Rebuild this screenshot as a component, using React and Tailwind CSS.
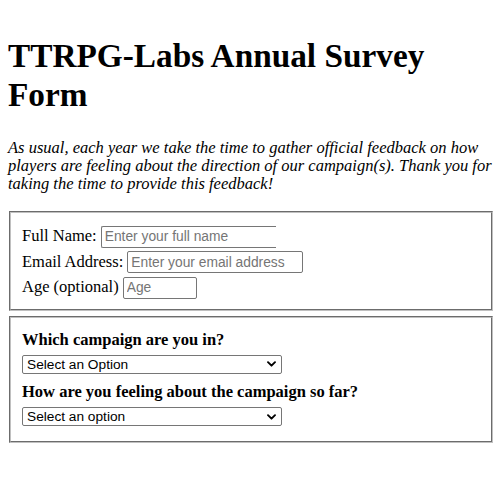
import React from "react";

function Chevron() {
  return (
    <svg
      className="pointer-events-none absolute right-[6px] top-1/2 -translate-y-1/2"
      width="9"
      height="6"
      viewBox="0 0 9 6"
      fill="none"
    >
      <path d="M1 1.2l3.5 3.5 3.5-3.5" stroke="#000" strokeWidth="1.9" strokeLinecap="round" strokeLinejoin="round" />
    </svg>
  );
}

function Select({ label }) {
  return (
    <div className="relative w-[260px] h-[19px]">
      <select
        defaultValue=""
        className="block appearance-none w-full h-full border border-[#767676] rounded-[2px] bg-white pl-[4px] pr-[20px] py-0 text-[13.7px] leading-[17px] font-['Liberation_Sans',Arial,sans-serif] text-black"
      >
        <option value="">{label}</option>
      </select>
      <Chevron />
    </div>
  );
}

const inputCls =
  "h-[22px] border border-[#767676] rounded-[2px] bg-white px-[3px] text-[13.8px] font-['Liberation_Sans',Arial,sans-serif] text-black placeholder:text-[#757575] outline-none";

export default function App() {
  return (
    <div className="min-h-[500px] bg-white pl-2 font-['Liberation_Serif','Times_New_Roman',serif] text-[16.5px] text-black">
      <h1 className="max-w-[470px] pt-[36px] text-[33.3px] font-bold leading-[39.3px]">
        TTRPG-Labs Annual Survey Form
      </h1>
      <p className="mt-[24px] w-[492px] italic leading-[18.4px]">
        As usual, each year we take the time to gather official feedback on how
        players are feeling about the direction of our campaign(s). Thank you
        for taking the time to provide this feedback!
      </p>

      <form className="mt-[17px]">
        <fieldset className="ml-px w-[484px] border-2 [border-style:groove] border-[#c0c0c0] pl-[11px] pt-[13px] pb-[10px]">
          <div className="flex flex-col gap-[3.5px]">
            <div className="flex h-[22px] items-center gap-[4px]">
              <label htmlFor="name">Full Name:</label>
              <input
                id="name"
                type="text"
                placeholder="Enter your full name"
                className={inputCls + " w-[175px] border-r-0 rounded-r-none"}
              />
            </div>
            <div className="flex h-[22px] items-center gap-[4px]">
              <label htmlFor="email">Email Address:</label>
              <input
                id="email"
                type="email"
                placeholder="Enter your email address"
                className={inputCls + " w-[176px]"}
              />
            </div>
            <div className="flex h-[22px] items-center gap-[4px]">
              <label htmlFor="age">Age (optional)</label>
              <input
                id="age"
                type="number"
                placeholder="Age"
                className={inputCls + " w-[74px]"}
              />
            </div>
          </div>
        </fieldset>

        <fieldset className="ml-px mt-[5.5px] w-[484px] border-2 [border-style:groove] border-[#c0c0c0] pl-[11px] pt-[13px] pb-[14.5px]">
          <p className="font-bold leading-[18.4px]">Which campaign are you in?</p>
          <div className="mt-[5px]">
            <Select label="Select an Option" />
          </div>
          <p className="mt-[9px] font-bold leading-[18.4px]">
            How are you feeling about the campaign so far?
          </p>
          <div className="mt-[6px]">
            <Select label="Select an option" />
          </div>
        </fieldset>
      </form>
    </div>
  );
}
